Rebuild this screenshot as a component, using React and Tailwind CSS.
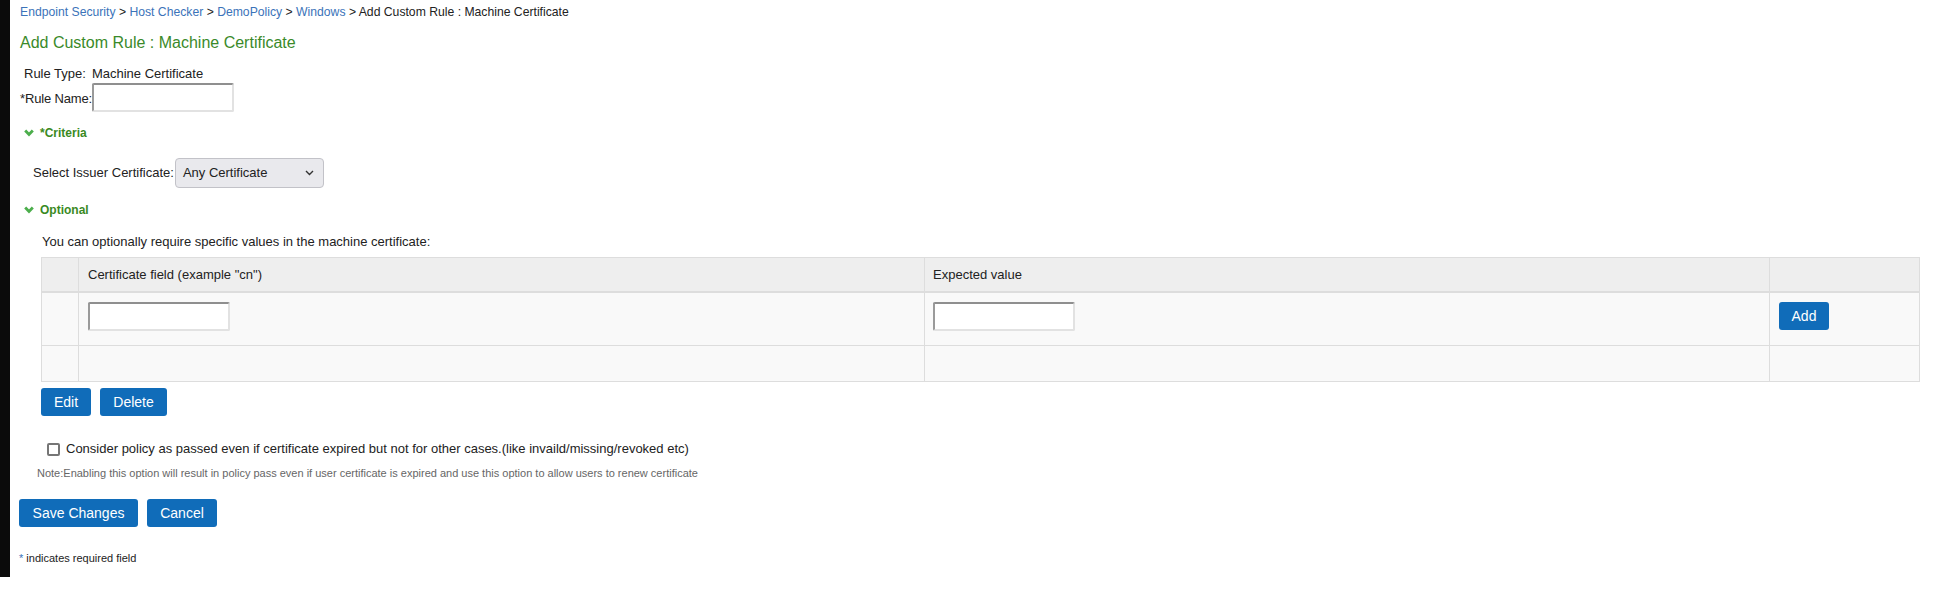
import React from "react";

function Chevron() {
  return (
    <svg width="10" height="8" viewBox="0 0 10 8" className="shrink-0">
      <path d="M1.2 1.5 L5 5.5 L8.8 1.5" fill="none" stroke="#4cae4c" strokeWidth="2.8" />
    </svg>
  );
}

function TextInput({ w = "w-[142px]" }) {
  return (
    <input
      type="text"
      className={`${w} h-[29px] bg-white border-2 border-t-[#8f8f8f] border-l-[#9a9a9a] border-b-[#e2e2e2] border-r-[#e2e2e2] rounded-[2px] outline-none`}
    />
  );
}

function Btn({ children, cls = "" }) {
  return (
    <button className={`bg-[#106cb9] text-white rounded-[3px] text-[14px] leading-none ${cls}`}>
      {children}
    </button>
  );
}

export default function App() {
  return (
    <div className="flex w-[1936px] min-h-[589px] bg-white text-[#222] font-['Liberation_Sans',Arial,sans-serif] text-[13px]">
      <div className="w-[10px] h-[577px] bg-[#0b0b0b] shrink-0" />
      <div className="flex-1 pl-[8px] pr-[16px] flex flex-col">
        <div className="mt-[5px] ml-[2px] h-[14px] leading-[14px] text-[12.2px] whitespace-nowrap">
          <span className="text-[#3b73b9]">Endpoint Security</span>
          <span> &gt; </span>
          <span className="text-[#3b73b9]">Host Checker</span>
          <span> &gt; </span>
          <span className="text-[#3b73b9]">DemoPolicy</span>
          <span> &gt; </span>
          <span className="text-[#3b73b9]">Windows</span>
          <span> &gt; Add Custom Rule : Machine Certificate</span>
        </div>
        <h1 className="mt-[14px] ml-[2px] h-[20px] text-[16px] leading-[20px] text-[#3a8a2a] font-normal">
          Add Custom Rule : Machine Certificate
        </h1>
        <div className="mt-[13px] ml-[6px] h-[16px] leading-[16px] flex">
          <span>Rule Type:</span>
          <span className="ml-[6px]">Machine Certificate</span>
        </div>
        <div className="mt-[1px] ml-[2px] flex items-center">
          <span className="leading-[16px] pt-[3px] tracking-[-0.15px]">*Rule Name:</span>
          <TextInput />
        </div>
        <div className="mt-[14px] ml-[6px] h-[14px] flex items-center gap-[6px]">
          <Chevron />
          <span className="text-[#3a8a1f] font-bold text-[12px] leading-[14px]">*Criteria</span>
        </div>
        <div className="mt-[18px] ml-[15px] flex items-center">
          <span>Select Issuer Certificate:</span>
          <div className="ml-[1px] w-[149px] h-[30px] bg-[#e9e9ed] border border-[#c2c2c8] rounded-[4px] flex items-center justify-between pl-[7px] pr-[9px]">
            <span>Any Certificate</span>
            <svg width="9" height="6" viewBox="0 0 9 6">
              <path d="M1 1 L4.5 4.5 L8 1" fill="none" stroke="#333" strokeWidth="1.4" />
            </svg>
          </div>
        </div>
        <div className="mt-[15px] ml-[6px] h-[14px] flex items-center gap-[6px]">
          <Chevron />
          <span className="text-[#3a8a1f] font-bold text-[12px] leading-[14px]">Optional</span>
        </div>
        <div className="mt-[17px] ml-[24px] h-[16px] leading-[16px]">
          You can optionally require specific values in the machine certificate:
        </div>
        <div className="mt-[7px] ml-[23px] border border-[#dddddd]">
          <div className="grid grid-cols-[37px_846px_845px_1fr] h-[35px] bg-[#eeeeee] border-b-2 border-[#dddddd]">
            <div className="border-r border-[#dddddd]" />
            <div className="border-r border-[#dddddd] pl-[9px] flex items-center pt-[1px]">
              Certificate field (example "cn")
            </div>
            <div className="border-r border-[#dddddd] pl-[8px] flex items-center pt-[1px]">
              Expected value
            </div>
            <div />
          </div>
          <div className="grid grid-cols-[37px_846px_845px_1fr] h-[53px] bg-[#f9f9f9] border-b border-[#dddddd]">
            <div className="border-r border-[#dddddd]" />
            <div className="border-r border-[#dddddd] pl-[9px] pt-[9px] flex items-start">
              <TextInput />
            </div>
            <div className="border-r border-[#dddddd] pl-[8px] pt-[9px] flex items-start">
              <TextInput />
            </div>
            <div className="pl-[9px] pt-[9px] flex items-start">
              <Btn cls="w-[50px] h-[28px]">Add</Btn>
            </div>
          </div>
          <div className="grid grid-cols-[37px_846px_845px_1fr] h-[35px] bg-[#f9f9f9]">
            <div className="border-r border-[#dddddd]" />
            <div className="border-r border-[#dddddd]" />
            <div className="border-r border-[#dddddd]" />
            <div />
          </div>
        </div>
        <div className="mt-[6px] ml-[23px] flex gap-[9px]">
          <Btn cls="w-[50px] h-[28px]">Edit</Btn>
          <Btn cls="w-[67px] h-[28px]">Delete</Btn>
        </div>
        <div className="mt-[25px] ml-[29px] h-[16px] flex items-center gap-[6px] leading-[16px]">
          <span className="w-[13px] h-[13px] border-2 border-[#767676] rounded-[2px] bg-white shrink-0" />
          <span>Consider policy as passed even if certificate expired but not for other cases.(like invaild/missing/revoked etc)</span>
        </div>
        <div className="mt-[10px] ml-[19px] h-[13px] text-[11px] leading-[13px] text-[#666]">
          Note:Enabling this option will result in policy pass even if user certificate is expired and use this option to allow users to renew certificate
        </div>
        <div className="mt-[19px] ml-[1px] flex gap-[9px]">
          <Btn cls="w-[119px] h-[28px]">Save Changes</Btn>
          <Btn cls="w-[70px] h-[28px]">Cancel</Btn>
        </div>
        <div className="mt-[25px] ml-[1px] h-[13px] text-[11px] leading-[13px]">
          <span className="text-[#3b73b9]">*</span> indicates required field
        </div>
      </div>
    </div>
  );
}
